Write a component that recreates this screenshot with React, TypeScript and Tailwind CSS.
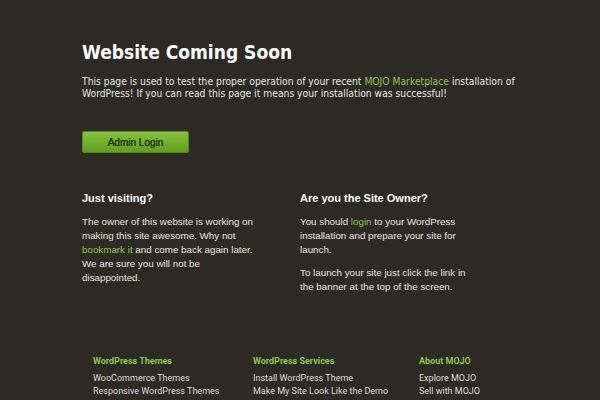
export default function App() {
  return (
    <div className="w-[600px] h-[400px] overflow-hidden bg-[#2d2a26] flex flex-col">
      <div className="pl-[82px] pr-[80px] pt-[40px]">
        <h1 className="text-[19px] leading-[24px] font-bold text-white [font-family:'DejaVu_Sans_Condensed','DejaVu_Sans',sans-serif]">
          Website Coming Soon
        </h1>
        <p className="mt-[11px] text-[10.25px] leading-[12px] text-[#e8e6e2] [font-family:'DejaVu_Sans_Condensed','DejaVu_Sans',sans-serif]">
          This page is used to test the proper operation of your recent{" "}
          <span className="text-[#8cc63f]">MOJO Marketplace</span> installation of WordPress! If you can read this page it means your installation was successful!
        </p>
        <div className="mt-[32px] w-[107px] h-[22px] rounded-[2px] border border-[#4e8a14] bg-gradient-to-b from-[#86c43a] to-[#5f9e1f] flex items-center justify-center text-[10px] text-[#1c3306] [font-family:'Liberation_Sans',sans-serif] [text-shadow:0_0_0.4px_#1c3306]">
          Admin Login
        </div>
        <div className="mt-[38px] flex gap-[40px] [font-family:'Liberation_Sans',sans-serif] text-[#e6e4e0]">
          <div className="w-[178px]">
            <h2 className="text-[11px] leading-[14px] font-bold text-white">Just visiting?</h2>
            <p className="mt-[10px] text-[9.8px] leading-[14px]">
              The owner of this website is working on making this site awesome. Why not{" "}
              <span className="text-[#8cc63f]">bookmark it</span> and come back again later. We are sure you will not be disappointed.
            </p>
          </div>
          <div className="w-[176px]">
            <h2 className="text-[11px] leading-[14px] font-bold text-white">Are you the Site Owner?</h2>
            <p className="mt-[10px] text-[9.8px] leading-[14px]">
              You should <span className="text-[#8cc63f]">login</span> to your WordPress installation and prepare your site for launch.
            </p>
            <p className="mt-[9px] text-[9.8px] leading-[14px]">
              To launch your site just click the link in the banner at the top of the screen.
            </p>
          </div>
        </div>
      </div>
      <div className="mt-auto mx-[65px] h-[45px] pl-[28px] flex [font-family:'Roboto',sans-serif] text-[9px]">
        <div className="w-[160px]">
          <div className="font-bold text-[#8cc63f] leading-[12px]">WordPress Themes</div>
          <div className="mt-[5px] text-[#dcdad6] leading-[13px]">WooCommerce Themes</div>
          <div className="text-[#dcdad6] leading-[13px]">Responsive WordPress Themes</div>
        </div>
        <div className="w-[166px]">
          <div className="font-bold text-[#8cc63f] leading-[12px]">WordPress Services</div>
          <div className="mt-[5px] text-[#dcdad6] leading-[13px]">Install WordPress Theme</div>
          <div className="text-[#dcdad6] leading-[13px]">Make My Site Look Like the Demo</div>
        </div>
        <div>
          <div className="font-bold text-[#8cc63f] leading-[12px]">About MOJO</div>
          <div className="mt-[5px] text-[#dcdad6] leading-[13px]">Explore MOJO</div>
          <div className="text-[#dcdad6] leading-[13px]">Sell with MOJO</div>
        </div>
      </div>
    </div>
  );
}
